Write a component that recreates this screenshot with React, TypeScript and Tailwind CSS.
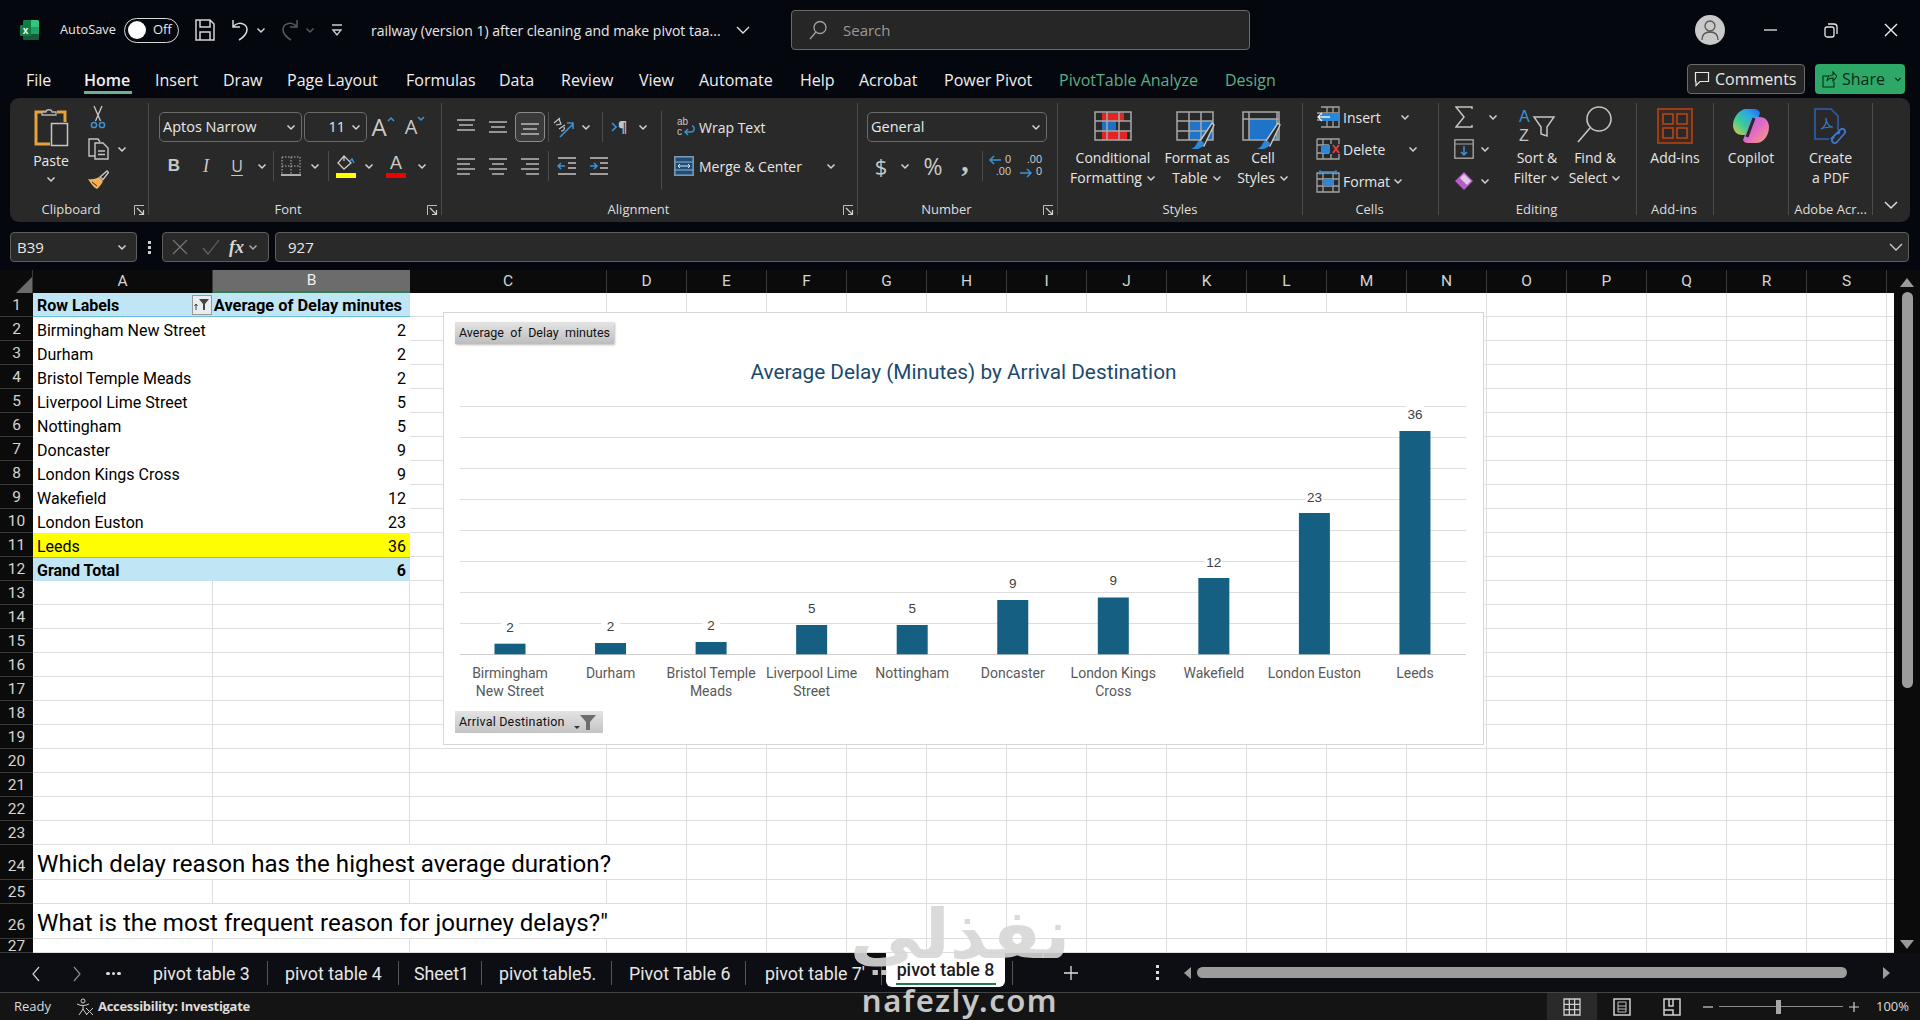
import React from "react";

const Chev = ({ c = "#d4d4d4" }: { c?: string }) => (
  <svg width="10" height="7" viewBox="0 0 10 7" className="shrink-0"><path d="M1.5 1.5 5 5l3.5-3.5" fill="none" stroke={c} strokeWidth="1.5" /></svg>
);
const G = "#c4c4c4";
const BL = "#3a93d6";

const I = ({ w, h, children, cn = "" }: { w: number; h: number; children: React.ReactNode; cn?: string }) => (
  <svg width={w} height={h} viewBox={`0 0 ${w} ${h}`} fill="none" className={"shrink-0 " + cn}>{children}</svg>
);

const Lines = ({ rows }: { rows: [number, number, number][] }) => (
  <I w={20} h={20}>{rows.map(([y, a, b], i) => <path key={i} d={`M${a} ${y}H${b}`} stroke={G} strokeWidth="1.4" />)}</I>
);

const Launcher = () => (
  <svg width="11" height="11" viewBox="0 0 11 11" fill="none"><path d="M.5 10V.5H10" stroke="#bdbdbd" /><path d="M3 3l6 6M9.5 5v4.5H5" stroke="#d0d0d0" strokeWidth="1.2" /></svg>
);

const Sep = ({ cn }: { cn: string }) => <div className={"w-px shrink-0 bg-[#4c4c4c] " + cn} />;

function Group({ w, label, lc = "", launcher, children }: { w: string; label?: string; lc?: string; launcher?: boolean; children: React.ReactNode }) {
  return (
    <div className={"flex shrink-0 " + w}>
      <div className="flex-1 min-w-0 flex flex-col">
        <div className="h-[102px]">{children}</div>
        <div className={"relative h-[20px] flex items-center justify-center text-[13px] text-[#dedede] " + lc}>
          {label}
          {launcher && <span className="absolute right-[3px] top-[5px] flex"><Launcher /></span>}
        </div>
      </div>
      <Sep cn="mt-[5px] h-[112px]" />
    </div>
  );
}

const Big = ({ w, icon, a, b, chev }: { w: string; icon: React.ReactNode; a: string; b?: string; chev?: boolean }) => (
  <div className={"flex flex-col items-center pt-[10px] text-[14px] leading-[20px] text-[#e6e6e6] shrink-0 " + w}>
    <div className="h-[40px] flex items-start justify-center">{icon}</div>
    <div className="whitespace-nowrap">{a}</div>
    {b && <div className="flex items-center gap-[4px] whitespace-nowrap">{b}{chev && <Chev />}</div>}
  </div>
);

const Cell = ({ w, children }: { w: string; children?: React.ReactNode }) => (
  <div className={"flex items-center justify-center shrink-0 h-full " + w}>{children}</div>
);

const Select = ({ w, children, right = false }: { w: string; children: React.ReactNode; right?: boolean }) => (
  <div className={"h-[30px] rounded-[5px] border border-[#6b6b6b] flex items-center text-[14.5px] text-[#e8e8e8] shrink-0 pr-[5px] " + w + (right ? " justify-end gap-[6px]" : " justify-between pl-[3px]")}>
    {children}
  </div>
);

const Grid = ({ children }: { children?: React.ReactNode }) => (
  <I w={38} h={30}>
    {children}
    <path d="M1 1h36v28H1zM1 10h36M1 20h36M13 1v28M25 1v28" stroke="#a8a8a8" strokeWidth="1.5" />
  </I>
);

const Brush = () => (
  <g>
    <path d="M22 33 36 12l2 2-10 21z" fill="#292929" stroke="#c8c8c8" strokeWidth="1.4" />
    <path d="M15 38c5 1 11 0 13-5 0-2-3-4-5-3-3 1-2 6-8 8z" fill="#2b88d8" />
  </g>
);

function Ribbon() {
  return (
    <div className="mx-[10px] h-[124px] bg-[#292929] rounded-[9px] flex shrink-0 font-['Open_Sans',sans-serif]">
      <Group w="w-[139px]" label="Clipboard" lc="pr-[16px]" launcher>
        <div className="flex h-full">
          <div className="w-[62px] ml-[10px] flex flex-col items-center pt-[9px]">
            <I w={36} h={40}>
              <path d="M17 5H3v32h14" stroke="#e6a23c" strokeWidth="3" />
              <path d="M9 8V5h4c0-3 6-3 6 0h4v3z" fill="#292929" stroke="#b5b5b5" strokeWidth="1.3" />
              <path d="M24 5h8v10" stroke="#e6a23c" strokeWidth="3" />
              <rect x="18.5" y="16.5" width="16" height="22" fill="#292929" stroke="#c6c6c6" strokeWidth="1.5" />
            </I>
            <div className="text-[14px] leading-[20px] text-[#e8e8e8] mt-[4px]">Paste</div>
            <div className="mt-[5px] flex"><Chev /></div>
          </div>
          <div className="flex flex-col items-center w-[32px] pt-[7px] gap-[9px]">
            <I w={16} h={24}>
              <path d="M4 1l6.5 15M12 1 5.500 16" stroke="#c9c9c9" strokeWidth="1.3" />
              <circle cx="4" cy="20" r="2.6" stroke={BL} strokeWidth="1.5" /><circle cx="12" cy="20" r="2.6" stroke={BL} strokeWidth="1.5" />
            </I>
            <I w={22} h={22}>
              <path d="M8 18H2V1h9l2 3" stroke="#c4c4c4" strokeWidth="1.4" />
              <path d="M8 5h8l5 5v11H8zM11 13h7M11 16.500h7" stroke="#c4c4c4" strokeWidth="1.4" />
            </I>
            <I w={22} h={20} cn="mt-[1px]">
              <path d="M13 7 20 1l1.500 1.500-5.500 7z" stroke="#c9c9c9" strokeWidth="1.3" />
              <path d="M1 9c5 1 9-1 11-2l4 4c-1 3-3 5-6 8-3-1-6-5-9-10z" fill="#f0b15a" />
              <path d="M5 12l5 4" stroke="#292929" />
            </I>
          </div>
          <div className="pt-[48px] pl-[3px] flex items-start"><Chev /></div>
        </div>
      </Group>

      <Group w="w-[293px]" label="Font" lc="pr-[14px]" launcher>
        <div className="pt-[14px] pl-[10px]">
          <div className="flex items-center h-[30px]">
            <Select w="w-[143px]"><span>Aptos Narrow</span><Chev /></Select>
            <div className="w-[2px]" />
            <Select w="w-[63px]" right><span>11</span><Chev /></Select>
            <Cell w="w-[32px]">
              <div className="flex items-start text-[#c8c8c8]"><span className="text-[24px] leading-[26px]">A</span><svg width="8" height="6" className="mt-[2px]"><path d="M1 5l3-3 3 3" fill="none" stroke={BL} strokeWidth="1.5" /></svg></div>
            </Cell>
            <Cell w="w-[32px]">
              <div className="flex items-start text-[#c8c8c8]"><span className="text-[20px] leading-[26px]">A</span><svg width="8" height="6" className="mt-[2px]"><path d="M1 1l3 3 3-3" fill="none" stroke={BL} strokeWidth="1.5" /></svg></div>
            </Cell>
          </div>
          <div className="flex items-center h-[30px] mt-[9px] text-[#c8c8c8]">
            <Cell w="w-[30px]"><span className="font-bold text-[17px] font-['Liberation_Sans',sans-serif]">B</span></Cell>
            <Cell w="w-[34px]"><span className="italic text-[18px] font-['Liberation_Serif',serif]">I</span></Cell>
            <Cell w="w-[28px]"><span className="underline underline-offset-[3px] text-[16px]">U</span></Cell>
            <Cell w="w-[22px]"><Chev /></Cell>
            <Sep cn="h-[30px]" />
            <Cell w="w-[34px]">
              <I w={20} h={20}><path d="M1 1h18v17M1 1v17M10 1v17M1 10h18" stroke="#b8b8b8" strokeDasharray="1.500 1.500" /><path d="M0 19h20" stroke="#cfcfcf" strokeWidth="1.6" /></I>
            </Cell>
            <Cell w="w-[14px]"><Chev /></Cell>
            <Sep cn="h-[30px] ml-[6px]" />
            <Cell w="w-[34px]">
              <I w={20} h={24}>
                <path d="M8 2l-6 7 6 6 7-6zM8 2v5" stroke="#c8c8c8" strokeWidth="1.300" />
                <path d="M14 7l2-2 2 4" stroke={BL} strokeWidth="1.500" />
                <rect y="19" width="20" height="5" fill="#ffff00" />
              </I>
            </Cell>
            <Cell w="w-[12px]"><Chev /></Cell>
            <Cell w="w-[42px]">
              <div className="flex flex-col items-center w-[20px]">
                <span className="text-[18px] leading-[18px] font-['Liberation_Sans',sans-serif]">A</span>
                <div className="w-[20px] h-[5px] bg-[#ee0000] mt-[1px]" />
              </div>
            </Cell>
            <Cell w="w-[10px]"><Chev /></Cell>
          </div>
        </div>
      </Group>

      <Group w="w-[416px]" label="Alignment" lc="pr-[22px]" launcher>
        <div className="flex h-full">
          <div className="w-[219px] pt-[14px] pl-[8px] shrink-0">
            <div className="flex items-center h-[30px]">
              <Cell w="w-[32px]"><Lines rows={[[3, 1, 19], [8, 3, 17], [13, 1, 19]]} /></Cell>
              <Cell w="w-[32px]"><Lines rows={[[5, 1, 19], [10, 3, 17], [15, 1, 19]]} /></Cell>
              <Cell w="w-[32px]">
                <div className="w-[30px] h-[30px] rounded-[5px] border border-[#8c8c8c] bg-[#3a3a3a] flex items-center justify-center"><Lines rows={[[7, 1, 19], [12, 3, 17], [17, 1, 19]]} /></div>
              </Cell>
              <Sep cn="h-[30px] ml-[2px]" />
              <Cell w="w-[30px]">
                <I w={22} h={22}>
                  <path d="M1 7l6-5M3 9l5-1-2-5M6 13l6-4M8 15c3 0 4-2 3-4" stroke="#c8c8c8" strokeWidth="1.200" />
                  <path d="M7 21 20 8M14 7h6v6" stroke={BL} strokeWidth="1.600" />
                </I>
              </Cell>
              <Cell w="w-[14px]"><Chev /></Cell>
              <Sep cn="h-[30px] ml-[9px]" />
              <Cell w="w-[32px]">
                <div className="flex items-center gap-[1px]"><svg width="6" height="10"><path d="M1 1l4 4-4 4" fill="none" stroke={BL} strokeWidth="1.600" /></svg><span className="text-[14px] leading-[14px] text-[#c4c4c4] font-bold">¶</span></div>
              </Cell>
              <Cell w="w-[16px]"><Chev /></Cell>
            </div>
            <div className="flex items-center h-[30px] mt-[9px]">
              <Cell w="w-[32px]"><Lines rows={[[3, 1, 19], [8, 1, 14], [13, 1, 19], [18, 1, 14]]} /></Cell>
              <Cell w="w-[32px]"><Lines rows={[[3, 1, 19], [8, 4, 16], [13, 1, 19], [18, 4, 16]]} /></Cell>
              <Cell w="w-[32px]"><Lines rows={[[3, 1, 19], [8, 6, 19], [13, 1, 19], [18, 6, 19]]} /></Cell>
              <Sep cn="h-[30px] ml-[2px]" />
              <Cell w="w-[36px]">
                <I w={20} h={20}><path d="M1 2h18M11 7h8M11 12h8M1 18h18" stroke={G} strokeWidth="1.400" /><path d="M1 10h7M4 7l-3 3 3 3" stroke={BL} strokeWidth="1.500" /></I>
              </Cell>
              <Cell w="w-[28px]">
                <I w={20} h={20}><path d="M1 2h18M11 7h8M11 12h8M1 18h18" stroke={G} strokeWidth="1.400" /><path d="M1 10h7M5 7l3 3-3 3" stroke={BL} strokeWidth="1.500" /></I>
              </Cell>
            </div>
          </div>
          <Sep cn="mt-[13px] h-[78px]" />
          <div className="flex-1 pt-[14px] text-[14px] text-[#e6e6e6]">
            <div className="flex items-center h-[30px] pl-[15px]">
              <I w={18} h={22}>
                <text x="0" y="9" fontSize="10" fill="#c8c8c8" fontFamily="Liberation Sans">ab</text>
                <text x="0" y="19" fontSize="10" fill="#c8c8c8" fontFamily="Liberation Sans">c</text>
                <path d="M15 10c3 0 3 6-1 6H8M11 13l-3 3 3 3" stroke={BL} strokeWidth="1.400" />
              </I>
              <span className="ml-[4px]">Wrap Text</span>
            </div>
            <div className="flex items-center h-[30px] mt-[9px] pl-[12px]">
              <I w={20} h={20}>
                <rect x=".8" y=".8" width="18.400" height="18.400" stroke="#7f9db5" strokeWidth="1.500" fill="#1d4f78" />
                <path d="M1 6h18M1 14h18" stroke="#8fb4d1" /><path d="M4 10h12M6 8l-2 2 2 2M14 8l2 2-2 2" stroke="#dfe9f1" />
              </I>
              <span className="ml-[5px] w-[127px] whitespace-nowrap">Merge &amp; Center</span>
              <Chev />
            </div>
          </div>
        </div>
      </Group>

      <Group w="w-[200px]" label="Number" lc="pr-[22px]" launcher>
        <div className="pt-[14px]">
          <div className="h-[30px] pl-[9px]"><Select w="w-[180px]"><span>General</span><Chev /></Select></div>
          <div className="flex items-center h-[30px] mt-[9px] pl-[8px] text-[#c8c8c8]">
            <Cell w="w-[30px]"><span className="text-[22px] leading-[24px]">$</span></Cell>
            <Cell w="w-[18px]"><Chev /></Cell>
            <Cell w="w-[38px]"><span className="text-[23px] leading-[24px]">%</span></Cell>
            <Cell w="w-[26px]"><span className="text-[30px] leading-[20px] font-bold font-['Liberation_Serif',serif] -mt-[10px]">,</span></Cell>
            <Sep cn="h-[30px] ml-[4px]" />
            <Cell w="w-[34px]">
              <div className="relative w-[22px] h-[24px] text-[11px] leading-[11px] text-[#c8c8c8] text-right font-['Liberation_Sans',sans-serif]">
                <div>0</div><div className="mt-[1px]">.00</div>
                <svg width="12" height="10" className="absolute left-0 top-[1px]"><path d="M12 5H1M5 1 1 5l4 4" fill="none" stroke={BL} strokeWidth="1.500" /></svg>
              </div>
            </Cell>
            <Cell w="w-[28px]">
              <div className="relative w-[22px] h-[24px] text-[11px] leading-[11px] text-[#c8c8c8] text-right font-['Liberation_Sans',sans-serif]">
                <div>.00</div><div className="mt-[1px]">0</div>
                <svg width="12" height="10" className="absolute left-0 bottom-0"><path d="M0 5h11M7 1l4 4-4 4" fill="none" stroke={BL} strokeWidth="1.500" /></svg>
              </div>
            </Cell>
          </div>
        </div>
      </Group>

      <Group w="w-[245px]" label="Styles">
        <div className="flex pl-[6px] h-full">
          <Big w="w-[98px]" a="Conditional" b="Formatting" chev icon={
            <div className="pt-[3px] flex"><Grid><rect x="8" y="2" width="22" height="8" fill="#e22424" /><rect x="8" y="10" width="14" height="10" fill="#1f6fc5" /><rect x="8" y="20" width="25" height="9" fill="#e22424" /></Grid></div>
          } />
          <Big w="w-[70px]" a="Format as" b="Table" chev icon={
            <div className="pt-[3px] flex"><svg width="42" height="38" viewBox="0 0 42 38" fill="none"><rect x="13" y="10" width="24" height="19" fill="#1f74c9" /><path d="M1 1h36v28H1zM1 10h36M1 20h36M13 1v28M25 1v28" stroke="#a8a8a8" strokeWidth="1.500" /><Brush /></svg></div>
          } />
          <Big w="w-[62px]" a="Cell" b="Styles" chev icon={
            <div className="pt-[3px] flex"><svg width="42" height="38" viewBox="0 0 42 38" fill="none"><rect x="7" y="8" width="28" height="21" fill="#1f74c9" /><path d="M1 1h36v28H1zM1 8h36M7 1v28M35 1v28" stroke="#a8a8a8" strokeWidth="1.500" /><Brush /></svg></div>
          } />
        </div>
      </Group>

      <Group w="w-[136px]" label="Cells" lc="pr-[2px]">
        <div className="pt-[3px] pl-[13px] text-[14px] text-[#e6e6e6]">
          <div className="flex items-center h-[32px]">
            <I w={24} h={22}><path d="M5 1h18v20H5M5 11h0M11 1v20M17 1v20M1 14h22M1 7h22" stroke="#a4a4a4" strokeWidth="1.300" /><rect x="5" y="7" width="18" height="8" fill="#2b88d8" /><path d="M14 11H2M6 7l-4 4 4 4" stroke="#e6f0f8" strokeWidth="1.400" /></I>
            <span className="ml-[3px] w-[54px]">Insert</span><Cell w="w-[16px]"><Chev /></Cell>
          </div>
          <div className="flex items-center h-[32px]">
            <I w={24} h={22}><path d="M1 1h22v5M1 1v20h22v-5M1 7h12M1 15h12M7 1v20M15 1v5M15 16v5" stroke="#a4a4a4" strokeWidth="1.300" /><rect x="5" y="7" width="9" height="8" fill="#2b88d8" /><path d="M17 7l6 8M23 7l-6 8" stroke="#e84040" strokeWidth="1.800" /></I>
            <span className="ml-[3px] w-[62px]">Delete</span><Cell w="w-[16px]"><Chev /></Cell>
          </div>
          <div className="flex items-center h-[32px]">
            <I w={24} h={24}><path d="M1 4h22v19H1zM1 10h22M1 17h22M7 4v19M17 4v19" stroke="#a4a4a4" strokeWidth="1.300" /><rect x="7" y="10" width="10" height="7" fill="#2b88d8" /><path d="M4 1v5M20 1v5M4 3h16" stroke={BL} strokeWidth="1.300" /></I>
            <span className="ml-[3px] w-[47px]">Format</span><Cell w="w-[16px]"><Chev /></Cell>
          </div>
        </div>
      </Group>

      <Group w="w-[198px]" label="Editing" lc="pr-[2px]">
        <div className="flex h-full pl-[10px]">
          <div className="w-[58px] pt-[3px] shrink-0">
            <div className="flex items-center h-[32px]">
              <Cell w="w-[30px]"><I w={18} h={22}><path d="M17 3V1H1l8 10-8 10h16v-2" stroke="#c4c4c4" strokeWidth="1.500" /></I></Cell>
              <Cell w="w-[28px]"><Chev /></Cell>
            </div>
            <div className="flex items-center h-[32px]">
              <Cell w="w-[30px]"><I w={20} h={20}><rect x=".8" y=".8" width="18.400" height="18.400" stroke="#a4a4a4" strokeWidth="1.400" /><path d="M1 5h18" stroke="#a4a4a4" /><path d="M10 7v9M7 13l3 3 3-3" stroke={BL} strokeWidth="1.500" /></I></Cell>
              <Cell w="w-[12px]"><Chev /></Cell>
            </div>
            <div className="flex items-center h-[32px]">
              <Cell w="w-[30px]"><I w={20} h={20}><path d="M10 1l9 9-9 9-9-9z" fill="#b55fc6" /><path d="M10 3l7 7-4 4-7-7z" fill="#e4c7ea" /></I></Cell>
              <Cell w="w-[12px]"><Chev /></Cell>
            </div>
          </div>
          <Big w="w-[60px]" a="Sort &" b="Filter" chev icon={
            <I w={38} h={36} cn="mt-[-1px]">
              <text x="1" y="15" fontSize="16" fill={BL} fontFamily="Liberation Sans">A</text>
              <text x="1" y="34" fontSize="16" fill="#c4c4c4" fontFamily="Liberation Sans">Z</text>
              <path d="M16 10h20l-7 10v9l-6-2v-7z" stroke="#c4c4c4" strokeWidth="1.500" />
            </I>
          } />
          <Big w="w-[56px]" a="Find &" b="Select" chev icon={
            <I w={38} h={38} cn="mt-[-3px]"><circle cx="23" cy="14" r="12" stroke="#c4c4c4" strokeWidth="1.600" /><path d="M14 23 2 37" stroke="#c4c4c4" strokeWidth="1.600" /></I>
          } />
        </div>
      </Group>

      <Group w="w-[77px]" label="Add-ins" lc="pr-[2px]">
        <Big w="w-full" a="Add-ins" icon={
          <I w={36} h={36}><rect x="1" y="1" width="34" height="34" stroke="#a63f14" strokeWidth="1.800" fill="#3a2a22" /><path d="M6 6h10v10H6zM20 6h10v10H20zM6 20h10v10H6zM20 20h10v10H20z" stroke="#b5481a" strokeWidth="1.600" fill="#292929" /></I>
        } />
      </Group>

      <Group w="w-[75px]" label="">
        <Big w="w-full" a="Copilot" icon={
          <svg width="38" height="36" viewBox="0 0 38 36">
            <defs>
              <linearGradient id="cpa" x1="0" y1="1" x2="1" y2="0"><stop offset="0" stopColor="#f2c14a" /><stop offset=".35" stopColor="#3fcf8e" /><stop offset=".7" stopColor="#2aa7e8" /><stop offset="1" stopColor="#2563eb" /></linearGradient>
              <linearGradient id="cpb" x1="0" y1="0" x2="1" y2="1"><stop offset="0" stopColor="#8a6cf0" /><stop offset=".5" stopColor="#e46ac8" /><stop offset="1" stopColor="#f5a070" /></linearGradient>
            </defs>
            <path d="M14 1h8c3 0 5 1 6 4l-8 22H10c-4 0-9-3-9-10 0-8 7-16 13-16z" fill="url(#cpa)" />
            <path d="M20 9h8c5 0 9 4 9 10 0 8-5 16-13 16h-8c-3 0-4-1-5-3l8-20c0-2 0-3 1-3z" fill="url(#cpb)" />
            <path d="M22 10l-7 19" stroke="#292929" strokeWidth="3" />
          </svg>
        } />
      </Group>

      <Group w="w-[84px]" label="Adobe Acr...">
        <Big w="w-full" a="Create" b="a PDF" icon={
          <I w={34} h={38}>
            <path d="M24 22V8l-7-7H1v30h14" stroke="#2c5fb0" strokeWidth="1.600" />
            <path d="M7 21c4-2 6-7 5-11 0 5 3 9 7 9-4 0-8 0-12 2z" stroke="#3f76c9" strokeWidth="1.200" />
            <path d="M18 30l8-8c3-3 7 1 4 4l-7 8c-3 3-7-1-4-4zM24 26l2-2" stroke="#3f76c9" strokeWidth="1.800" />
          </I>
        } />
      </Group>

      <div className="flex-1 flex justify-center items-start pt-[102px] pr-[1px]">
        <svg width="16" height="10"><path d="M2 2l6 6 6-6" fill="none" stroke="#dcdcdc" strokeWidth="1.500" /></svg>
      </div>
    </div>
  );
}

const TABS: [string, string, string?][] = [
  ["File", "w-[58px]"], ["Home", "w-[71px]", "home"], ["Insert", "w-[68px]"], ["Draw", "w-[64px]"], ["Page Layout", "w-[119px]"],
  ["Formulas", "w-[93px]"], ["Data", "w-[62px]"], ["Review", "w-[78px]"], ["View", "w-[60px]"], ["Automate", "w-[101px]"],
  ["Help", "w-[59px]"], ["Acrobat", "w-[85px]"], ["Power Pivot", "w-[115px]"], ["PivotTable Analyze", "w-[166px]", "green"], ["Design", "w-[60px]", "green"],
];

const COLS = ["D", "E", "F", "G", "H", "I", "J", "K", "L", "M", "N", "O", "P", "Q", "R", "S"];
const PIVOT: [string, string][] = [["Birmingham New Street", "2"], ["Durham", "2"], ["Bristol Temple Meads", "2"], ["Liverpool Lime Street", "5"], ["Nottingham", "5"], ["Doncaster", "9"], ["London Kings Cross", "9"], ["Wakefield", "12"], ["London Euston", "23"], ["Leeds", "36"]];

function rowH(r: number) {
  if (r === 24 || r === 26) return "h-[35px]";
  if (r === 27) return "h-[14px]";
  return "h-[24px]";
}

const RestCells = ({ from }: { from: "C" | "D" }) => (
  <>
    {from === "C" && <div className="w-[197px] shrink-0 border-r border-b border-[#dedede]" />}
    {COLS.map((c) => <div key={c} className="w-[80px] shrink-0 border-r border-b border-[#dedede]" />)}
    <div className="w-[7px] shrink-0 border-b border-[#dedede]" />
  </>
);

function Row({ r }: { r: number }) {
  let a: React.ReactNode;
  const base = "flex items-center px-[4px] pt-[3px] whitespace-nowrap shrink-0 ";
  if (r === 1) {
    a = (
      <>
        <div className={base + "w-[180px] bg-[#c0e6f5] font-bold justify-between pr-[1px] border-b border-[#6cc0e0]"}>
          <span>Row Labels</span>
          <div className="w-[20px] h-[20px] -mt-[3px] bg-[#e9edef] border border-[#9a9a9a] flex items-center justify-center">
            <svg width="16" height="14" fill="none"><path d="M5 1h10l-4 5v6H9V6z" fill="#444" /><path d="M2 12V6M0.500 8 2 6l1.500 2" stroke="#444" /></svg>
          </div>
        </div>
        <div className={base + "w-[197px] bg-[#c0e6f5] font-bold justify-end pl-[2px] pr-[8px] border-b border-[#6cc0e0]"}>
          <span className="text-[16.4px]">Average of Delay minutes</span>
        </div>
      </>
    );
  } else if (r <= 11) {
    const [l, v] = PIVOT[r - 2];
    const bg = r === 11 ? "bg-[#ffff00]" : "bg-white";
    a = (
      <>
        <div className={base + "w-[180px] " + bg}>{l}</div>
        <div className={base + "w-[197px] justify-end " + bg}>{v}</div>
      </>
    );
  } else if (r === 12) {
    a = (
      <>
        <div className={base + "w-[180px] bg-[#c0e6f5] font-bold border-t border-[#6cc0e0]"}>Grand Total</div>
        <div className={base + "w-[197px] bg-[#c0e6f5] font-bold justify-end border-t border-[#6cc0e0]"}>6</div>
      </>
    );
  } else if (r === 24 || r === 26) {
    a = (
      <div className="w-[574px] shrink-0 flex items-center px-[4px] pt-[4px] whitespace-nowrap text-[24.1px] leading-[30px] border-b border-[#dedede] text-black">
        {r === 24 ? "Which delay reason has the highest average duration?" : 'What is the most frequent reason for journey delays?"'}
      </div>
    );
  } else {
    a = (
      <>
        <div className="w-[180px] shrink-0 border-r border-b border-[#dedede]" />
        <div className="w-[197px] shrink-0 border-r border-b border-[#dedede]" />
      </>
    );
  }
  const merged = r === 24 || r === 26;
  return (
    <div className={"flex shrink-0 " + rowH(r)}>
      <div className={"w-[33px] shrink-0 bg-[#0b0b0b] border-b border-[#3a3a3a] flex justify-center text-[15.5px] text-[#d4d4d4] " + (merged ? "items-end pb-[1px]" : "items-center pt-[3px]")}>{r}</div>
      {a}
      <RestCells from={merged ? "D" : "C"} />
    </div>
  );
}

const BARS: [string[], number, number, number][] = [
  [["Birmingham", "New Street"], 2, 643.7, 627], [["Durham"], 2, 643, 626], [["Bristol Temple", "Meads"], 2, 642, 625],
  [["Liverpool Lime", "Street"], 5, 625, 608], [["Nottingham"], 5, 625, 608], [["Doncaster"], 9, 600, 583],
  [["London Kings", "Cross"], 9, 597.5, 580.5], [["Wakefield"], 12, 578, 562], [["London Euston"], 23, 513, 497], [["Leeds"], 36, 431, 414],
];

function Chart() {
  return (
    <div className="absolute left-[443px] top-[42px] w-[1041px] h-[433px] bg-white border border-[#d6d6d6] flex flex-col">
      <div className="h-[22px] w-[159px] ml-[11px] mt-[9px] px-[4px] flex items-center justify-between text-[12.5px] text-[#111] bg-gradient-to-b from-[#e4e4e4] to-[#bdbdbd] shadow-[1px_1px_2px_#bbb] font-['Roboto',sans-serif] whitespace-nowrap">
        <span>Average</span><span>of</span><span>Delay</span><span>minutes</span>
      </div>
      <div className="mt-[14px] h-[28px] text-center text-[20.8px] leading-[28px] text-[#1b4a6e] font-['Roboto',sans-serif]">Average Delay (Minutes) by Arrival Destination</div>
      <svg width="1039" height="322" viewBox="0 0 1039 322" className="shrink-0" fontFamily="Roboto">
        {Array.from({ length: 9 }).map((_, i) => (
          <path key={i} d={`M16 ${20.5 + 31 * i}H1022`} stroke={i === 8 ? "#cfcfcf" : "#dedede"} strokeWidth="1" />
        ))}
        {BARS.map(([lab, v, top, ly], i) => {
          const cx = 66 + 100.55 * i;
          return (
            <g key={i}>
              <rect x={cx - 15.500} y={top - 386} width="31" height={654.3 - top} fill="#156082" />
              <rect x={cx - 9} y={ly - 395} width="18" height="17" fill="#fff" />
              <text x={cx} y={ly - 386} textAnchor="middle" dominantBaseline="central" fontSize="13.500" fill="#404040" fontFamily="Liberation Sans">{v}</text>
              {lab.map((t, j) => (
                <text key={j} x={cx} y={287 + j * 18} textAnchor="middle" dominantBaseline="central" fontSize="14" fill="#595959">{t}</text>
              ))}
            </g>
          );
        })}
      </svg>
      <div className="h-[22px] w-[148px] ml-[11px] mt-[3px] px-[4px] flex items-center justify-between text-[12.5px] tracking-[0.2px] text-[#111] bg-gradient-to-b from-[#e4e4e4] to-[#c4c4c4] font-['Roboto',sans-serif] whitespace-nowrap">
        <span>Arrival Destination</span>
        <svg width="26" height="18" fill="none"><path d="M1 13h6l-3 3z" fill="#333" /><path d="M7 2h16l-6 7v8h-4V9z" fill="#6e6e6e" /></svg>
      </div>
    </div>
  );
}

const SHEETS: [string, string, string][] = [
  ["pivot table 3", "w-[114px]", "mr-[17px]"], ["pivot table 4", "w-[113px]", "mr-[15px]"], ["Sheet1", "w-[67px]", "mr-[17px]"],
  ["pivot table5.", "w-[112px]", "mr-[17px]"], ["Pivot Table 6", "w-[116px]", "mr-[19px]"], ["pivot table 7'", "w-[116px]", "mr-[4px]"],
];

export default function App() {
  return (
    <div className="relative w-[1920px] h-[1020px] overflow-hidden bg-[#05070f] text-[#e8e8e8] flex flex-col font-['Open_Sans',sans-serif]">
      {/* title bar */}
      <div className="h-[60px] shrink-0 flex items-center">
        <svg width="20" height="22" viewBox="0 0 20 22" className="ml-[20px] shrink-0">
          <rect x="3" y="1" width="16" height="20" rx="2" fill="#21a366" />
          <path d="M3 3a2 2 0 0 1 2-2h6v7H3z" fill="#107c41" /><path d="M11 1h6a2 2 0 0 1 2 2v5h-8z" fill="#33c481" />
          <path d="M3 15h16v4a2 2 0 0 1-2 2H5a2 2 0 0 1-2-2z" fill="#185c37" />
          <rect y="6" width="11" height="11" rx="1" fill="#107c41" />
          <text x="5.500" y="15" textAnchor="middle" fontSize="10" fontWeight="700" fill="#fff" fontFamily="Liberation Sans">x</text>
        </svg>
        <span className="ml-[20px] text-[12.8px] w-[64px]">AutoSave</span>
        <div className="w-[55px] h-[25px] rounded-full border border-[#d8d8d8] flex items-center pl-[3px] shrink-0">
          <div className="w-[18px] h-[18px] rounded-full bg-white" />
          <span className="ml-[7px] text-[13px]">Off</span>
        </div>
        <I w={20} h={22} cn="ml-[16px]"><path d="M1 1h14l4 4v16H1zM5 1v7h10V1M5 21v-8h10v8" stroke="#d4d4d4" strokeWidth="1.500" /></I>
        <I w={20} h={24} cn="ml-[16px]"><path d="M2 2v7h7M2 9c3-4 8-5 12-2 4 4 2 10-6 15" stroke="#d8d8d8" strokeWidth="1.500" /></I>
        <div className="ml-[5px] flex"><Chev /></div>
        <I w={20} h={24} cn="ml-[13px]"><path d="M18 2v7h-7M18 9c-3-4-8-5-12-2-4 4-2 10 6 15" stroke="#5a5a5a" strokeWidth="1.500" /></I>
        <div className="ml-[6px] flex"><Chev c="#5a5a5a" /></div>
        <I w={12} h={14} cn="ml-[16px]"><path d="M1 2h10M2 7l4 5 4-5z" stroke="#d0d0d0" strokeWidth="1.300" /></I>
        <span className="ml-[28px] w-[358px] text-[14px] whitespace-nowrap text-[#e8e8e8] shrink-0">railway (version 1) after cleaning and make pivot taa...</span>
        <svg width="14" height="9" className="ml-[7px] shrink-0"><path d="M1 1l6 6 6-6" fill="none" stroke="#e0e0e0" strokeWidth="1.400" /></svg>
        <div className="ml-[41px] w-[459px] h-[40px] rounded-[4px] border border-[#6a6a6a] bg-[#262626] flex items-center shrink-0">
          <I w={18} h={20} cn="ml-[17px]"><circle cx="11" cy="7.500" r="6" stroke="#a0a0a0" strokeWidth="1.300" /><path d="M7 12 1 19" stroke="#a0a0a0" strokeWidth="1.300" /></I>
          <span className="ml-[16px] text-[15px] text-[#9a9a9a]">Search</span>
        </div>
        <div className="ml-[445px] w-[30px] h-[30px] rounded-full bg-[#c9c9c9] flex items-center justify-center shrink-0">
          <svg width="20" height="22" fill="none"><circle cx="10" cy="7" r="5" stroke="#555" strokeWidth="1.300" /><path d="M2 21c0-6 3-8 8-8s8 2 8 8" stroke="#555" strokeWidth="1.300" /></svg>
        </div>
        <svg width="13" height="2" className="ml-[39px] shrink-0"><path d="M0 1h13" stroke="#e8e8e8" strokeWidth="1.300" /></svg>
        <svg width="14" height="15" fill="none" className="ml-[47px] shrink-0"><rect x="1" y="4" width="9" height="10" rx="2" stroke="#e8e8e8" strokeWidth="1.300" /><path d="M4 1h6a3 3 0 0 1 3 3v7" stroke="#e8e8e8" strokeWidth="1.300" /></svg>
        <svg width="14" height="14" fill="none" className="ml-[46px] shrink-0"><path d="M1 1l12 12M13 1 1 13" stroke="#f0f0f0" strokeWidth="1.400" /></svg>
      </div>

      {/* tabs */}
      <div className="h-[38px] shrink-0 flex items-start pl-[26px]">
        <div className="flex h-[40px] items-center text-[16px] flex-1">
          {TABS.map(([t, w, k]) => (
            <div key={t} className={"relative shrink-0 whitespace-nowrap " + w + (k === "green" ? " text-[#5fae85]" : " text-[#efefef]") + (k === "home" ? " font-semibold" : "")}>
              {t}
              {k === "home" && <span className="absolute left-0 top-[23px] w-[48px] h-[3px] bg-[#6fb08f]" />}
            </div>
          ))}
        </div>
        <div className="mt-[4px] w-[118px] h-[30px] rounded-[4px] border border-[#6a6a6a] bg-[#262626] flex items-center text-[16px] shrink-0">
          <svg width="16" height="16" fill="none" className="ml-[6px] mr-[5px]"><path d="M1.500 1.500h13v9H6l-4 4v-4H1.500z" stroke="#e8e8e8" strokeWidth="1.200" /></svg>
          Comments
        </div>
        <div className="mt-[4px] ml-[10px] mr-[15px] w-[90px] h-[30px] rounded-[4px] bg-[#2ea866] flex items-center text-[16px] text-[#0b2a18] shrink-0">
          <svg width="16" height="18" fill="none" className="ml-[6px] mr-[5px]"><path d="M8 6H2v11h11v-5M6 11c0-4 3-6 6-6V2l4 4.500-4 4.500V8c-3 0-5 1-6 3z" stroke="#0b2a18" strokeWidth="1.100" /></svg>
          Share
          <div className="ml-[8px] flex scale-75"><Chev c="#0b2a18" /></div>
        </div>
      </div>

      <Ribbon />

      {/* formula bar */}
      <div className="mt-[10px] h-[30px] shrink-0 flex items-center text-[15px] text-[#e8e8e8]">
        <div className="ml-[10px] w-[127px] h-[30px] rounded-[4px] border border-[#5e5e5e] bg-[#292929] flex items-center justify-between pl-[6px] pr-[9px]">B39<Chev /></div>
        <div className="w-[25px] flex flex-col items-center gap-[2px]"><i className="w-[3px] h-[3px] bg-[#d0d0d0]" /><i className="w-[3px] h-[3px] bg-[#d0d0d0]" /><i className="w-[3px] h-[3px] bg-[#d0d0d0]" /></div>
        <div className="w-[107px] h-[30px] rounded-[4px] border border-[#5e5e5e] bg-[#292929] flex items-center pl-[9px]">
          <svg width="16" height="16" fill="none"><path d="M1 1l14 14M15 1 1 15" stroke="#777" strokeWidth="1.200" /></svg>
          <svg width="18" height="16" fill="none" className="ml-[14px]"><path d="M1 9l5 6L17 1" stroke="#666" strokeWidth="1.200" /></svg>
          <span className="ml-[9px] italic font-bold text-[18px] leading-[18px] font-['Liberation_Serif',serif] text-[#d8d8d8]">fx</span>
          <div className="ml-[4px] flex"><Chev c="#aaaaaa" /></div>
        </div>
        <div className="ml-[6px] w-[1634px] h-[30px] rounded-[4px] border border-[#5e5e5e] bg-[#292929] flex items-center justify-between pl-[12px] pr-[5px]">
          927
          <svg width="14" height="9"><path d="M1 1l6 6 6-6" fill="none" stroke="#cfcfcf" strokeWidth="1.300" /></svg>
        </div>
      </div>

      {/* sheet */}
      <div className="mt-[8px] h-[683px] shrink-0 flex">
        <div className="relative w-[1894px] shrink-0 flex flex-col overflow-hidden bg-white font-['Roboto',sans-serif] text-[16px] text-black">
          <div className="h-[23px] shrink-0 flex bg-[#0b0b0b] text-[15.5px] text-[#d4d4d4]">
            <div className="w-[33px] shrink-0 flex items-end justify-end border-r border-[#3a3a3a]">
              <svg width="16" height="16"><path d="M16 0v16H0z" fill="#6b6b6b" /></svg>
            </div>
            <div className="w-[180px] shrink-0 flex items-center justify-center border-r border-[#3a3a3a]">A</div>
            <div className="w-[197px] shrink-0 flex items-center justify-center bg-[#6c6c6c] text-[#f0f0f0] border-b-2 border-[#2f7d55]">B</div>
            <div className="w-[197px] shrink-0 flex items-center justify-center border-r border-[#3a3a3a]">C</div>
            {COLS.map((c) => <div key={c} className="w-[80px] shrink-0 flex items-center justify-center border-r border-[#3a3a3a]">{c}</div>)}
            <div className="flex-1" />
          </div>
          {Array.from({ length: 27 }).map((_, i) => <Row key={i} r={i + 1} />)}
          <Chart />
        </div>
        <div className="flex-1 flex flex-col items-center bg-[#0b0b0b]">
          <svg width="14" height="9" className="mt-[8px] shrink-0"><path d="M7 0l7 9H0z" fill="#9a9a9a" /></svg>
          <div className="mt-[5px] w-[11px] h-[396px] rounded-full bg-[#9c9c9c] shrink-0" />
          <svg width="14" height="9" className="mt-[252px] shrink-0"><path d="M7 9l7-9H0z" fill="#9a9a9a" /></svg>
        </div>
      </div>

      {/* sheet tabs */}
      <div className="h-[40px] shrink-0 bg-[#0d0d14] border-b border-[#454545] flex text-[17.8px] font-['Roboto',sans-serif] text-[#e6e6e6]">
        <div className="w-[153px] shrink-0 flex items-center pt-[2px]">
          <svg width="10" height="16" fill="none" className="ml-[31px]"><path d="M8 1 2 8l6 7" stroke="#d0d0d0" strokeWidth="1.200" /></svg>
          <svg width="10" height="16" fill="none" className="ml-[31px]"><path d="M2 1l6 7-6 7" stroke="#8c8c8c" strokeWidth="1.200" /></svg>
          <div className="ml-[24px] flex gap-[2px]"><i className="w-[3.500px] h-[3.500px] rounded-full bg-[#dcdcdc]" /><i className="w-[3.500px] h-[3.500px] rounded-full bg-[#dcdcdc]" /><i className="w-[3.500px] h-[3.500px] rounded-full bg-[#dcdcdc]" /></div>
        </div>
        {SHEETS.map(([s, w, m]) => (
          <React.Fragment key={s}>
            <div className={"shrink-0 flex items-center pt-[3px] whitespace-nowrap " + w}><span>{s}</span></div>
            <div className={"w-[1px] h-[24px] mt-[8px] bg-[#555] shrink-0 " + m} />
          </React.Fragment>
        ))}
        <div className="w-[119px] h-[34px] shrink-0 bg-white rounded-b-[6px] text-[#1d1d1d] font-medium text-[17.8px] flex flex-col items-center pt-[6px]">
          <span className="leading-[22px]">pivot table 8</span>
          <span className="w-[100px] h-[2px] bg-[#1f7a4d] mt-[2px]" />
        </div>
        <div className="w-[1px] h-[24px] mt-[8px] ml-[7px] bg-[#555] shrink-0" />
        <div className="w-[117px] flex items-center pl-[51px] shrink-0">
          <svg width="14" height="14"><path d="M7 0v14M0 7h14" stroke="#e0e0e0" strokeWidth="1.300" /></svg>
        </div>
        <div className="w-[30px] flex flex-col items-center justify-center gap-[3px] shrink-0 ml-[12px]"><i className="w-[3px] h-[3px] bg-[#dcdcdc]" /><i className="w-[3px] h-[3px] bg-[#dcdcdc]" /><i className="w-[3px] h-[3px] bg-[#dcdcdc]" /></div>
        <div className="flex items-center shrink-0 ml-[12px]">
          <svg width="7" height="12"><path d="M7 0v12L0 6z" fill="#9c9c9c" /></svg>
          <div className="ml-[6px] w-[650px] h-[11px] rounded-full bg-[#9c9c9c]" />
          <svg width="7" height="12" className="ml-[36px]"><path d="M0 0v12l7-6z" fill="#9c9c9c" /></svg>
        </div>
      </div>

      {/* status */}
      <div className="flex-1 bg-[#141414] flex items-center text-[13px] text-[#dcdcdc]">
        <span className="ml-[14px] w-[62px]">Ready</span>
        <svg width="18" height="18" fill="none" className="shrink-0"><circle cx="7" cy="3" r="2" stroke="#d0d0d0" /><path d="M1 6c4 2 8 2 12 0M7 8v3l-4 6M7 11l4 6M10 10l7 7M17 10l-7 7" stroke="#d0d0d0" /></svg>
        <span className="ml-[4px] w-[1449px] font-bold text-[13px] tracking-[-0.3px]">Accessibility: Investigate</span>
        <div className="w-[50px] h-[27px] bg-[#2a2a2a] flex items-center justify-center">
          <svg width="18" height="18" fill="none"><path d="M1 1h16v16H1zM1 6.300h16M1 11.600h16M6.300 1v16M11.600 1v16" stroke="#d0d0d0" strokeWidth="1.300" /></svg>
        </div>
        <div className="w-[50px] flex items-center justify-center">
          <svg width="18" height="18" fill="none"><path d="M1 1h16v16H1z" stroke="#d0d0d0" strokeWidth="1.500" /><path d="M5 4h8v10H5zM5 8h8M5 11h8" stroke="#c0c0c0" /></svg>
        </div>
        <div className="w-[50px] flex items-center justify-center">
          <svg width="18" height="18" fill="none"><path d="M1 1h16v16H1zM6 1v7h4V1M1 12h9v5" stroke="#d0d0d0" strokeWidth="1.500" /></svg>
        </div>
        <svg width="10" height="2" className="ml-[6px] shrink-0"><path d="M0 1h10" stroke="#d0d0d0" strokeWidth="1.200" /></svg>
        <div className="ml-[6px] w-[124px] h-[14px] flex items-center shrink-0">
          <div className="w-[57px] h-px bg-[#8a8a8a]" /><div className="w-[5px] h-[14px] bg-[#a8a8a8]" /><div className="w-[62px] h-px bg-[#8a8a8a]" />
        </div>
        <svg width="10" height="10" className="ml-[6px] shrink-0"><path d="M5 0v10M0 5h10" stroke="#d0d0d0" strokeWidth="1.200" /></svg>
        <span className="ml-[17px] text-[13px]">100%</span>
      </div>

      {/* watermark */}
      <div className="absolute left-[854px] top-[894px] w-[212px] h-[82px] flex items-center justify-center scale-x-[1.06] font-['DejaVu_Sans',sans-serif] font-bold text-[68px] leading-[82px] text-[#d6d6d6]/90 pointer-events-none" dir="rtl">نفذلي</div>
      <div className="absolute left-[853px] top-[980px] w-[214px] text-center font-['Noto_Sans',sans-serif] font-semibold text-[31px] leading-[40px] tracking-[1.5px] text-[#c6c6c6] pointer-events-none">nafezly.com</div>
    </div>
  );
}
